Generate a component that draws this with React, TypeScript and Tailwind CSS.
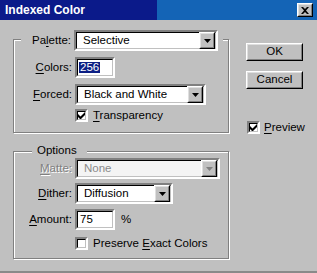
import React from 'react';

/* ---------- Win95 primitives ---------- */
const sunken = 'border-2 border-t-[#808080] border-l-[#808080] border-b-white border-r-white';
const sunkenInner = 'border border-t-black border-l-black border-b-[#c0c0c0] border-r-[#c0c0c0]';
const raised = 'border border-t-white border-l-white border-b-black border-r-black';
const raisedInner = 'border border-t-[#dfdfdf] border-l-[#dfdfdf] border-b-[#808080] border-r-[#808080]';
const etched = 'border border-[#808080] shadow-[inset_1px_1px_0_#fff,1px_1px_0_#fff]';

const U: React.FC<{ children: React.ReactNode }> = ({ children }) => (
  <span className="underline underline-offset-[2px] decoration-1">{children}</span>
);

const Arrow: React.FC<{ disabled?: boolean }> = ({ disabled }) => (
  <div className={`${raised} w-[16px] h-[17px] bg-[#c0c0c0] shrink-0`}>
    <div className={`${raisedInner} w-full h-full flex items-center justify-center`}>
      <svg width="7" height="4" viewBox="0 0 7 4">
        <path d="M0 0h7L3.5 4z" fill={disabled ? '#808080' : '#000'} />
      </svg>
    </div>
  </div>
);

const Select: React.FC<{ text: string; w: string; disabled?: boolean }> = ({ text, w, disabled }) => (
  <div className={`${sunken} ${w} h-[21px] shrink-0`}>
    <div className={`${sunkenInner} h-full flex items-center ${disabled ? 'bg-[#f4f4f4]' : 'bg-white'}`}>
      <span className={`flex-1 pl-[6px] ${disabled ? 'text-[#8a8a8a]' : 'text-black'}`}>{text}</span>
      <Arrow disabled={disabled} />
    </div>
  </div>
);

const Input: React.FC<{ children: React.ReactNode }> = ({ children }) => (
  <div className={`${sunken} w-[40px] h-[21px] shrink-0`}>
    <div className={`${sunkenInner} h-full bg-white flex items-center pl-[1px]`}>{children}</div>
  </div>
);

const Check: React.FC<{ checked?: boolean }> = ({ checked }) => (
  <div className={`${sunken} w-[13px] h-[13px] shrink-0`}>
    <div className={`${sunkenInner} h-full bg-white flex items-center justify-center`}>
      {checked && (
        <svg width="7" height="7" viewBox="0 0 7 7">
          <path d="M0 2v3l2 2h1l4-4V0L2.5 4.5z" fill="#000" />
        </svg>
      )}
    </div>
  </div>
);

const Button: React.FC<{ children: React.ReactNode }> = ({ children }) => (
  <div className={`${raised} w-[57px] h-[18px] bg-[#c0c0c0]`}>
    <div className={`${raisedInner} h-full flex items-center justify-center`}>{children}</div>
  </div>
);

const Label: React.FC<{ children: React.ReactNode; w?: string; disabled?: boolean }> = ({ children, w = 'w-[58px]', disabled }) => (
  <div className={`${w} text-right shrink-0 ${disabled ? 'text-[#808080] [text-shadow:1px_1px_0_#fff]' : ''}`}>{children}</div>
);

/* ---------- Dialog ---------- */
export default function App() {
  return (
    <div
      className="w-[317px] h-[273px] bg-[#c0c0c0] flex flex-col text-[11.5px] leading-none text-black border-b-2 border-[#8a8a8a] overflow-hidden"
      style={{ fontFamily: '"Liberation Sans", Arial, sans-serif' }}
    >
      {/* title bar */}
      <div className="h-[20px] shrink-0 flex items-center pl-[5px] pr-[4px] bg-[linear-gradient(to_right,#0b1a8a_157px,#1464b6_157px)]">
        <span className="flex-1 text-white font-bold text-[12px]">Indexed Color</span>
        <div className={`${raised} w-[16px] h-[14px] bg-[#c0c0c0]`}>
          <div className={`${raisedInner} h-full flex items-center justify-center`}>
            <svg width="8" height="7" viewBox="0 0 8 7">
              <path d="M0 0h2l2 2 2-2h2L5 3.5 8 7H6L4 5 2 7H0l3-3.5z" fill="#000" />
            </svg>
          </div>
        </div>
      </div>

      <div className="flex pl-[13px]">
        {/* left column */}
        <div className="w-[216px] flex flex-col">
          <div className={`${etched} mt-[19px] flex flex-col pb-[10px]`}>
            <div className="-mt-[10px] ml-[7px] w-[202px] bg-[#c0c0c0] flex items-center gap-[3px] h-[21px]">
              <Label w="w-[50px]">Pa<U>l</U>ette:</Label>
              <Select text="Selective" w="w-[144px]" />
            </div>
            <div className="mt-[6px] flex items-center gap-[3px]">
              <Label><U>C</U>olors:</Label>
              <Input>
                <span className="bg-[#0c1f84] text-white px-[1px]">256</span>
              </Input>
            </div>
            <div className="mt-[6px] flex items-center gap-[3px]">
              <Label><U>F</U>orced:</Label>
              <Select text="Black and White" w="w-[131px]" />
            </div>
            <div className="mt-[4px] flex items-center pl-[61px] gap-[5px]">
              <Check checked />
              <span><U>T</U>ransparency</span>
            </div>
          </div>

          <div className={`${etched} mt-[18px] flex flex-col pb-[8px]`}>
            <div className="-mt-[8px] ml-[18px] w-[55px] h-[14px] bg-[#c0c0c0] flex items-center pl-[5px]">
              Options
            </div>
            <div className="flex items-center gap-[3px]">
              <Label disabled><U>M</U>atte:</Label>
              <Select text="None" w="w-[145px]" disabled />
            </div>
            <div className="mt-[4px] flex items-center gap-[3px]">
              <Label><U>D</U>ither:</Label>
              <Select text="Diffusion" w="w-[98px]" />
            </div>
            <div className="mt-[5px] flex items-center gap-[3px]">
              <Label><U>A</U>mount:</Label>
              <Input>
                <span className="pl-[1px]">75</span>
              </Input>
              <span className="ml-[3px]">%</span>
            </div>
            <div className="mt-[7px] flex items-center pl-[61px] gap-[5px]">
              <Check />
              <span>Preserve <U>E</U>xact Colors</span>
            </div>
          </div>
        </div>

        {/* right column */}
        <div className="ml-[17px] flex flex-col">
          <div className="mt-[23px]">
            <Button>OK</Button>
          </div>
          <div className="mt-[10px]">
            <Button>Cancel</Button>
          </div>
          <div className="mt-[32px] flex items-center gap-[4px] pl-[1px]">
            <Check checked />
            <span><U>P</U>review</span>
          </div>
        </div>
      </div>
    </div>
  );
}
